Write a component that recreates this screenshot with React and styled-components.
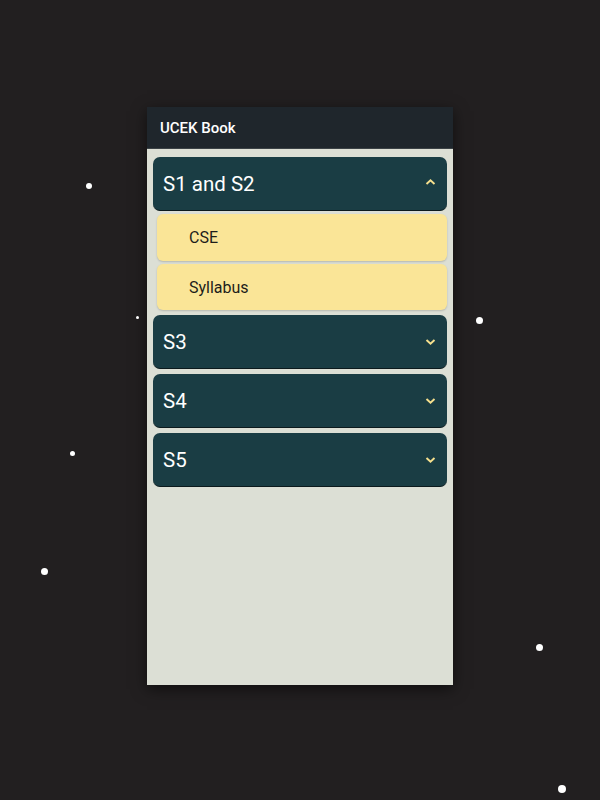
import React from 'react';
import styled, { createGlobalStyle } from 'styled-components';

const GlobalStyle = createGlobalStyle`
    html, body {
        margin: 0;
        padding: 0;
        background: #221f20;
    }
    body {
        font-family: Roboto, "Liberation Sans", sans-serif;
    }
`

const Page = styled.div`
    position: relative;
    width: 600px;
    height: 800px;
    overflow: hidden;
    background: #221f20;
    display: flex;
    justify-content: center;
    padding-top: 107px;
    box-sizing: border-box;
`
const Star = styled.span`
    position: absolute;
    border-radius: 50%;
    background: #ffffff;
`
const Phone = styled.div`
    width: 306px;
    height: 578px;
    background: #dcdfd5;
    display: flex;
    flex-direction: column;
    box-shadow: 0 4px 14px rgba(0, 0, 0, 0.55);
`
const AppBar = styled.header`
    height: 41px;
    flex-shrink: 0;
    background: #1f262c;
    color: #ffffff;
    display: flex;
    align-items: center;
    padding-left: 13px;
    font-size: 15px;
    font-weight: 500;
    border-bottom: 1px solid #3b4246;
`
const List = styled.div`
    display: flex;
    flex-direction: column;
    gap: 5px;
    padding: 8px 6px 0 6px;
`
const Section = styled.div`
    display: flex;
    flex-direction: column;
    gap: 3px;
`
const SectionHeader = styled.div`
    height: 53px;
    background: #1a3d44;
    border-radius: 7px;
    border-bottom: 1px solid #0b1a1d;
    display: flex;
    align-items: center;
    justify-content: space-between;
    padding: 1px 10px 0 10px;
    box-sizing: border-box;
    height: 54px;
    color: #ffffff;
    font-size: 20.5px;
`
const Chevron = styled.svg`
    width: 13px;
    height: 13px;
    margin-top: ${({open}) => (open ? '-3px' : '-2px')};
`
const Item = styled.div`
    height: 46.5px;
    margin-left: 4px;
    background: #fae597;
    border-radius: 6px;
    box-shadow: 0 1px 2px rgba(0, 0, 0, 0.18);
    display: flex;
    align-items: center;
    padding-left: 32px;
    padding-top: 1px;
    box-sizing: border-box;
    color: #1d1d1b;
    font-size: 16px;
`

const stars = [
    { x: 89, y: 186, r: 3 },
    { x: 137, y: 317, r: 1.5 },
    { x: 479, y: 320, r: 3.5 },
    { x: 72, y: 453, r: 2.5 },
    { x: 44, y: 571, r: 3.5 },
    { x: 539, y: 647, r: 3.5 },
    { x: 562, y: 789, r: 4 },
]

const sections = [
    { title: 'S1 and S2', open: true, items: ['CSE', 'Syllabus'] },
    { title: 'S3' },
    { title: 'S4' },
    { title: 'S5' },
]

function Arrow({ open }) {
    return (
        <Chevron open={open} viewBox="0 0 13 13">
            <path
                d={open ? 'M2.5 8 L6.5 4.2 L10.5 8' : 'M2.5 5 L6.5 8.8 L10.5 5'}
                fill="none"
                stroke="#f6e08e"
                strokeWidth="1.9"
            />
        </Chevron>
    )
}

export default function App() {
    return (
        <Page>
            <GlobalStyle />
            {stars.map((s, i) => (
                <Star key={i} style={{ left: s.x - s.r, top: s.y - s.r, width: s.r * 2, height: s.r * 2 }} />
            ))}
            <Phone>
                <AppBar>UCEK Book</AppBar>
                <List>
                    {sections.map((sec) => (
                        <Section key={sec.title}>
                            <SectionHeader>
                                <span>{sec.title}</span>
                                <Arrow open={sec.open} />
                            </SectionHeader>
                            {sec.open && sec.items.map((it) => <Item key={it}>{it}</Item>)}
                        </Section>
                    ))}
                </List>
            </Phone>
        </Page>
    )
}
